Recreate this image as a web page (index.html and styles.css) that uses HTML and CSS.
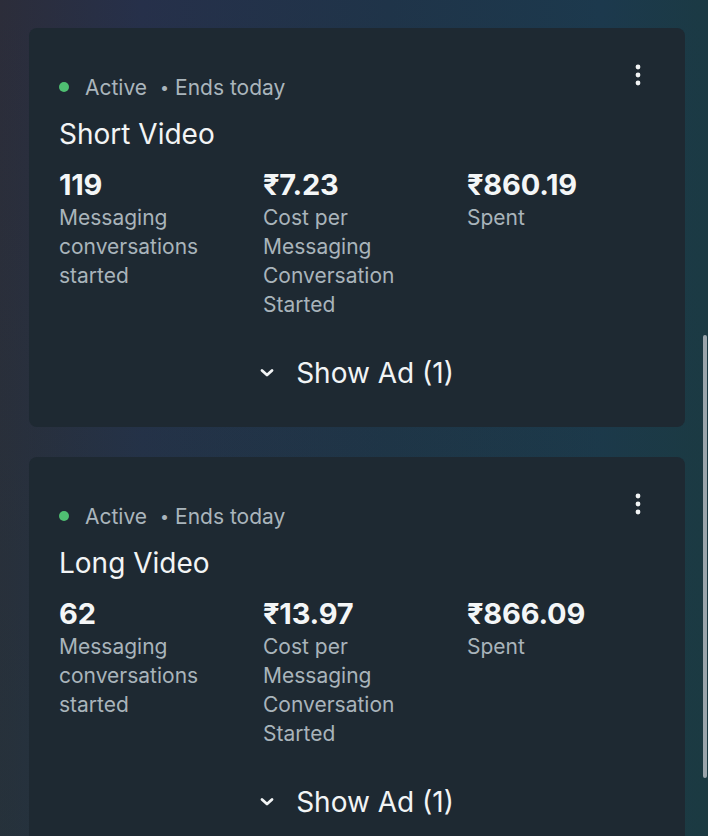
FILE: index.html
```html
<!DOCTYPE html>
<html lang="en">
<head>
<meta charset="utf-8">
<title>Campaigns</title>
<link rel="stylesheet" href="styles.css">
</head>
<body>
<div class="page">
  <div class="list">
    <section class="card">
      <div class="top">
        <div class="status"><span class="dot"></span><span class="state">Active</span><span class="sep">•</span><span>Ends today</span></div>
        <svg class="more" width="8" height="24" viewBox="0 0 8 24"><circle cx="4" cy="4" r="2.4" fill="#f2f4f5"/><circle cx="4" cy="12" r="2.4" fill="#f2f4f5"/><circle cx="4" cy="20" r="2.4" fill="#f2f4f5"/></svg>
      </div>
      <h2 class="title">Short Video</h2>
      <div class="stats">
        <div class="stat"><div class="num">119</div><div class="lbl">Messaging conversations started</div></div>
        <div class="stat"><div class="num">₹7.23</div><div class="lbl">Cost per Messaging Conversation Started</div></div>
        <div class="stat"><div class="num">₹860.19</div><div class="lbl">Spent</div></div>
      </div>
      <div class="show"><svg class="chev" width="14" height="10" viewBox="0 0 14 10"><path d="M2 2.5 L7 7 L12 2.5" fill="none" stroke="#f2f4f5" stroke-width="2.8" stroke-linecap="round" stroke-linejoin="round"/></svg><span>Show Ad (1)</span></div>
    </section>
    <section class="card">
      <div class="top">
        <div class="status"><span class="dot"></span><span class="state">Active</span><span class="sep">•</span><span>Ends today</span></div>
        <svg class="more" width="8" height="24" viewBox="0 0 8 24"><circle cx="4" cy="4" r="2.4" fill="#f2f4f5"/><circle cx="4" cy="12" r="2.4" fill="#f2f4f5"/><circle cx="4" cy="20" r="2.4" fill="#f2f4f5"/></svg>
      </div>
      <h2 class="title">Long Video</h2>
      <div class="stats">
        <div class="stat"><div class="num">62</div><div class="lbl">Messaging conversations started</div></div>
        <div class="stat"><div class="num">₹13.97</div><div class="lbl">Cost per Messaging Conversation Started</div></div>
        <div class="stat"><div class="num">₹866.09</div><div class="lbl">Spent</div></div>
      </div>
      <div class="show"><svg class="chev" width="14" height="10" viewBox="0 0 14 10"><path d="M2 2.5 L7 7 L12 2.5" fill="none" stroke="#f2f4f5" stroke-width="2.8" stroke-linecap="round" stroke-linejoin="round"/></svg><span>Show Ad (1)</span></div>
    </section>
  </div>
  <div class="scrollbar"></div>
</div>
</body>
</html>
```

FILE: styles.css
```css
* { box-sizing: border-box; }
html, body { margin: 0; padding: 0; }
body {
  width: 708px;
  height: 836px;
  overflow: hidden;
  font-family: Inter, "Noto Sans", "DejaVu Sans", sans-serif;
  background: #1f2a38;
}
.page {
  position: relative;
  width: 708px;
  height: 836px;
  overflow: hidden;
  background:
    linear-gradient(180deg, rgba(29,56,80,0.0) 0%, rgba(27,58,60,0.35) 100%),
    linear-gradient(90deg, #2c2d3a 0%, #26304a 20%, #1f3449 55%, #1c394d 85%, #1b3a44 100%);
}
.list {
  display: flex;
  flex-direction: column;
  gap: 30px;
  padding: 28px 23px 0 29px;
}
.card {
  background: #1e2932;
  border-radius: 8px;
  padding: 45px 30px 37px 30px;
}
.top {
  display: flex;
  justify-content: space-between;
  align-items: flex-start;
}
.status {
  display: flex;
  align-items: center;
  height: 28px;
  font-size: 21px;
  color: #aab5bc;
}
.dot {
  width: 10px;
  height: 10px;
  border-radius: 50%;
  background: #4fbf72;
  margin-right: 16px;
}
.sep {
  margin-left: 13px;
  margin-right: 6px;
  font-size: 16px;
}
.more {
  margin-top: -10px;
  margin-right: 13px;
}
.title {
  margin: 16px 0 0 0;
  font-size: 28px;
  line-height: 34px;
  font-weight: 400;
  color: #f2f4f5;
}
.stats {
  display: grid;
  grid-template-columns: 204px 204px 1fr;
  margin-top: 18px;
}
.num {
  font-size: 29px;
  line-height: 32px;
  font-weight: 700;
  color: #f4f6f7;
  letter-spacing: -0.2px;
}
.lbl {
  margin-top: 2px;
  font-size: 21px;
  line-height: 29px;
  color: #a9b4bb;
  max-width: 150px;
}
.stat:nth-child(2) .lbl { max-width: 140px; }
.show {
  display: flex;
  justify-content: center;
  align-items: center;
  margin-top: 37px;
  height: 34px;
  font-size: 28px;
  color: #f2f4f5;
}
.chev {
  margin-right: 22px;
}
.scrollbar {
  position: absolute;
  left: 703px;
  top: 335px;
  width: 4px;
  height: 443px;
  border-radius: 2px;
  background: #9aa5ab;
}
```
